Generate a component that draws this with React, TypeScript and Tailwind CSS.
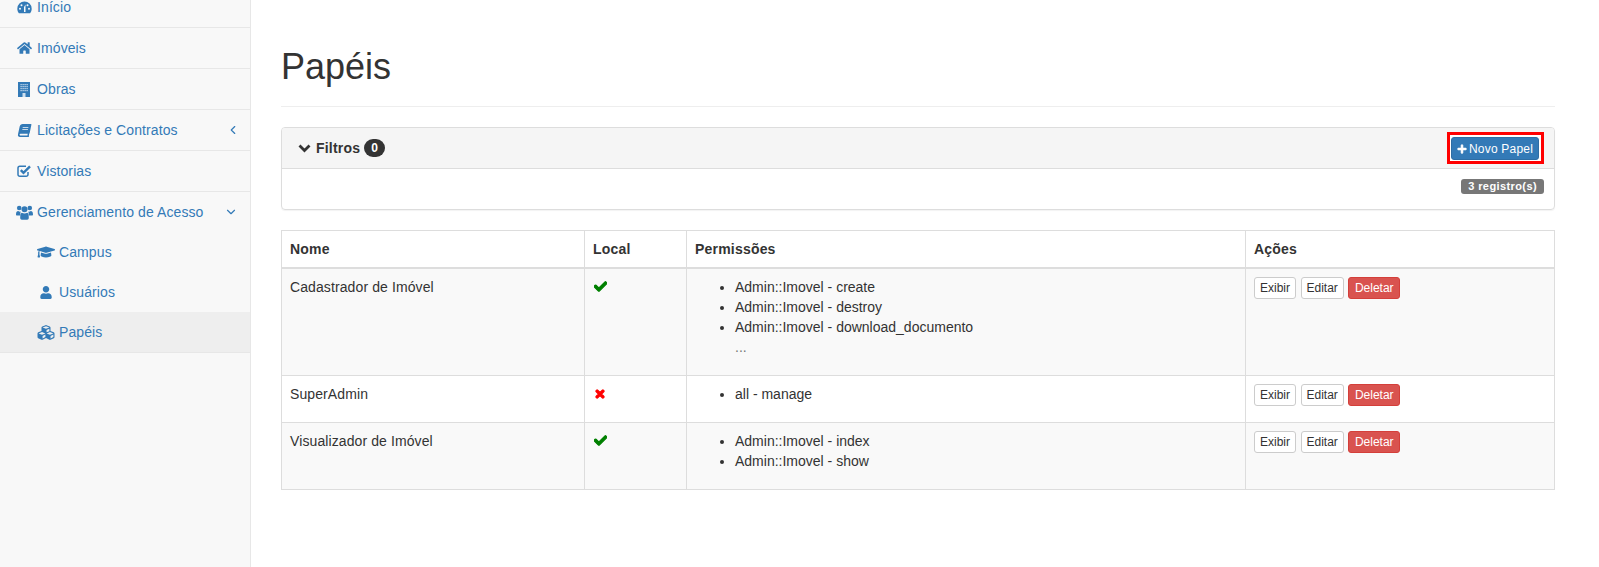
import { FaHome, FaBook, FaGraduationCap, FaUser, FaCubes, FaCheck, FaTimes, FaPlus } from 'react-icons/fa';
import { ChevronLeft, ChevronDown } from 'lucide-react';

function InicioIcon() {
  return (
    <svg width="15" height="13" viewBox="0 0 15 13" className="mr-[5px]">
      <path d="M7.500 0.500A7.200 7.200 0 0 0 0.300 7.700C0.300 9.400 0.900 11 1.900 12.300H13.100C14.100 11 14.700 9.400 14.700 7.700A7.200 7.200 0 0 0 7.500 0.500Z" fill="currentColor" />
      <circle cx="3" cy="7.800" r="1" fill="#f8f8f8" />
      <circle cx="4.500" cy="4.200" r="1" fill="#f8f8f8" />
      <circle cx="10.500" cy="4.200" r="1" fill="#f8f8f8" />
      <circle cx="12" cy="7.800" r="1" fill="#f8f8f8" />
      <path d="M7 11V6L8.500 3.500V11Z" fill="#f8f8f8" />
    </svg>
  );
}

function ObrasIcon() {
  return (
    <svg width="12" height="15" viewBox="0 0 12 15" className="ml-[1px] mr-[7px]">
      <rect x="0" y="0" width="12" height="15" fill="currentColor" />
      {[2.5, 4.5, 6.5, 8.5].map(x =>
        [2, 4, 6, 8].map(y => <rect key={`${x}-${y}`} x={x} y={y} width="1.2" height="1.2" fill="#cfe0ef" />)
      )}
      <rect x="4.500" y="11" width="3" height="4" fill="#cfe0ef" />
    </svg>
  );
}

function VistoriasIcon() {
  return (
    <svg width="15" height="14" viewBox="0 0 15 14" className="mr-[5px]">
      <path d="M11 8v2.500A1.800 1.800 0 0 1 9.200 12.300H2.800A1.800 1.800 0 0 1 1 10.500V4.100A1.800 1.800 0 0 1 2.800 2.300H9" fill="none" stroke="currentColor" strokeWidth="1.500" />
      <path d="M3.800 6.200L6.500 8.900L13 2.400" fill="none" stroke="currentColor" strokeWidth="2.400" />
    </svg>
  );
}

function GruposIcon() {
  return (
    <svg width="17" height="15" viewBox="0 0 17 15" className="mr-[4px]" fill="currentColor">
      <circle cx="3.200" cy="3" r="2.300" />
      <circle cx="13.800" cy="3" r="2.300" />
      <circle cx="8.500" cy="4.200" r="3" />
      <path d="M0 9.500C0 6.800 1 6 2.200 6C3 6.600 3.800 6.800 4.600 6.600C4.300 8 4.300 9.200 4.300 10.500H1C0.400 10.500 0 10.100 0 9.500Z" />
      <path d="M17 9.500C17 6.800 16 6 14.800 6C14 6.600 13.200 6.800 12.400 6.600C12.700 8 12.700 9.200 12.700 10.500H16C16.600 10.500 17 10.100 17 9.500Z" />
      <path d="M5.800 7.800C7.400 8.800 9.600 8.800 11.200 7.800C12.300 8 12.800 9.500 12.800 12.800C12.800 14 12.200 14.700 11.200 14.700H5.800C4.800 14.700 4.200 14 4.200 12.800C4.200 9.500 4.700 8 5.800 7.800Z" />
    </svg>
  );
}

function RowButtons() {
  return (
    <div className="flex gap-[4.5px]">
      <button className="h-[22px] px-[5px] border border-[#ccc] rounded-[3px] bg-white text-[12px] leading-[18px] text-[#333]">Exibir</button>
      <button className="h-[22px] px-[5px] border border-[#ccc] rounded-[3px] bg-white text-[12px] leading-[18px] text-[#333]">Editar</button>
      <button className="h-[22px] px-[5.5px] border border-[#d43f3a] rounded-[3px] bg-[#d9534f] text-[12px] leading-[18px] text-white">Deletar</button>
    </div>
  );
}

export default function App() {
  const rows = [
    { nome: 'Cadastrador de Imóvel', ok: true, perms: ['Admin::Imovel - create', 'Admin::Imovel - destroy', 'Admin::Imovel - download_documento'], more: true, stripe: true, h: 'h-[108px]' },
    { nome: 'SuperAdmin', ok: false, perms: ['all - manage'], more: false, stripe: false, h: 'h-[47px]' },
    { nome: 'Visualizador de Imóvel', ok: true, perms: ['Admin::Imovel - index', 'Admin::Imovel - show'], more: false, stripe: true, h: 'h-[67px]' },
  ];

  return (
    <div className="flex h-[567px] overflow-hidden bg-white font-['Liberation_Sans',Arial,sans-serif] text-[14px] leading-[20px] text-[#333]">
      {/* Sidebar */}
      <aside className="w-[251px] shrink-0 bg-[#f8f8f8] border-r border-[#e7e7e7] text-[#337ab7] tracking-[0.1px]">
        <div className="-mt-[13px]">
          <a className="flex items-center h-[41px] pl-[17px] border-b border-[#e7e7e7]"><InicioIcon />Início</a>
          <a className="flex items-center h-[41px] pl-[17px] border-b border-[#e7e7e7]"><FaHome size={14} className="w-[15px] mr-[5px]" />Imóveis</a>
          <a className="flex items-center h-[41px] pl-[17px] border-b border-[#e7e7e7]"><ObrasIcon />Obras</a>
          <a className="flex items-center h-[41px] pl-[17px] border-b border-[#e7e7e7]"><FaBook size={13} className="w-[15px] mr-[5px] -skew-x-12" />Licitações e Contratos<ChevronLeft size={14} strokeWidth={2} className="ml-auto mr-[10px]" /></a>
          <a className="flex items-center h-[41px] pl-[17px] border-b border-[#e7e7e7]"><VistoriasIcon />Vistorias</a>
          <a className="flex items-center h-[40px] pl-[16px]"><GruposIcon />Gerenciamento de Acesso<ChevronDown size={14} strokeWidth={2} className="ml-auto mr-[12px]" /></a>
          <a className="flex items-center h-[40px] pl-[37px]"><FaGraduationCap size={18} className="w-[18px] mr-[4px]" />Campus</a>
          <a className="flex items-center h-[40px] pl-[37px]"><FaUser size={13} className="w-[18px] mr-[4px]" />Usuários</a>
          <a className="flex items-center h-[41px] pl-[37px] bg-[#eee] border-b border-[#e7e7e7]"><FaCubes size={17} className="w-[18px] mr-[4px]" />Papéis</a>
        </div>
      </aside>

      {/* Conteudo */}
      <main className="flex-1 min-w-0 pl-[30px] pr-[44px]">
        <h1 className="mt-[47px] pb-[19px] mb-[20px] border-b border-[#eee] text-[36px] leading-[40px] font-medium text-[#333]">Papéis</h1>

        <div className="border border-[#ddd] rounded-[4px] shadow-[0_1px_1px_rgba(0,0,0,0.05)] mb-[20px]">
          <div className="flex items-center h-[41px] pl-[16px] pr-[10px] bg-[#f5f5f5] border-b border-[#ddd] rounded-t-[3px]">
            <svg width="13" height="9" viewBox="0 0 13 9" className="mr-[5px]">
              <path d="M1.500 1.500L6.500 6.500L11.500 1.500" fill="none" stroke="currentColor" strokeWidth="2.800" />
            </svg>
            <span className="font-bold tracking-[0.2px]">Filtros</span>
            <span className="ml-[4px] h-[18px] w-[21px] rounded-[10px] bg-[#333] text-white text-center text-[12px] font-bold leading-[18px]">0</span>
            <div className="ml-auto border-[3px] border-[#f00] bg-white pt-[2px] pb-[1px] pl-[1px] pr-[2px]">
              <button className="flex items-center h-[23px] px-[5px] bg-[#337ab7] border border-[#2e6da4] rounded-[3px] text-white text-[12px] leading-[18px] tracking-[0.2px]"><FaPlus size={10} strokeWidth={30} className="mr-[2px]" />Novo Papel</button>
            </div>
          </div>
          <div className="flex justify-end h-[40px] pt-[10px] pr-[10px]">
            <span className="h-[15px] px-[7px] rounded-[3px] bg-[#777] text-white text-[11px] font-bold leading-[15px] tracking-[0.4px]">3 registro(s)</span>
          </div>
        </div>

        <table className="w-full table-fixed border-collapse border border-[#ddd]">
          <thead>
            <tr className="h-[37px] tracking-[0.2px]">
              <th className="w-[303px] px-[8px] border border-b-2 border-[#ddd] text-left font-bold">Nome</th>
              <th className="w-[102px] px-[8px] border border-b-2 border-[#ddd] text-left font-bold">Local</th>
              <th className="px-[8px] border border-b-2 border-[#ddd] text-left font-bold">Permissões</th>
              <th className="w-[309px] px-[8px] border border-b-2 border-[#ddd] text-left font-bold">Ações</th>
            </tr>
          </thead>
          <tbody>
            {rows.map(row => (
              <tr key={row.nome} className={`${row.h} ${row.stripe ? 'bg-[#f9f9f9]' : 'bg-white'}`}>
                <td className="p-[8px] align-top border border-[#ddd] tracking-[0.1px]">{row.nome}</td>
                <td className="p-[8px] align-top border border-[#ddd]">
                  {row.ok ? <FaCheck size={13} strokeWidth={40} className="mt-[3px] ml-[1px] text-[#008000]" /> : <FaTimes size={12} strokeWidth={50} className="mt-[4px] ml-[1px] text-[#f00]" />}
                </td>
                <td className="p-[8px] align-top border border-[#ddd]">
                  <ul className="list-disc pl-[40px]">
                    {row.perms.map(p => <li key={p}>{p}</li>)}
                    {row.more && <li className="list-none text-[#777]">...</li>}
                  </ul>
                </td>
                <td className="p-[8px] align-top border border-[#ddd]"><RowButtons /></td>
              </tr>
            ))}
          </tbody>
        </table>
      </main>
    </div>
  );
}
